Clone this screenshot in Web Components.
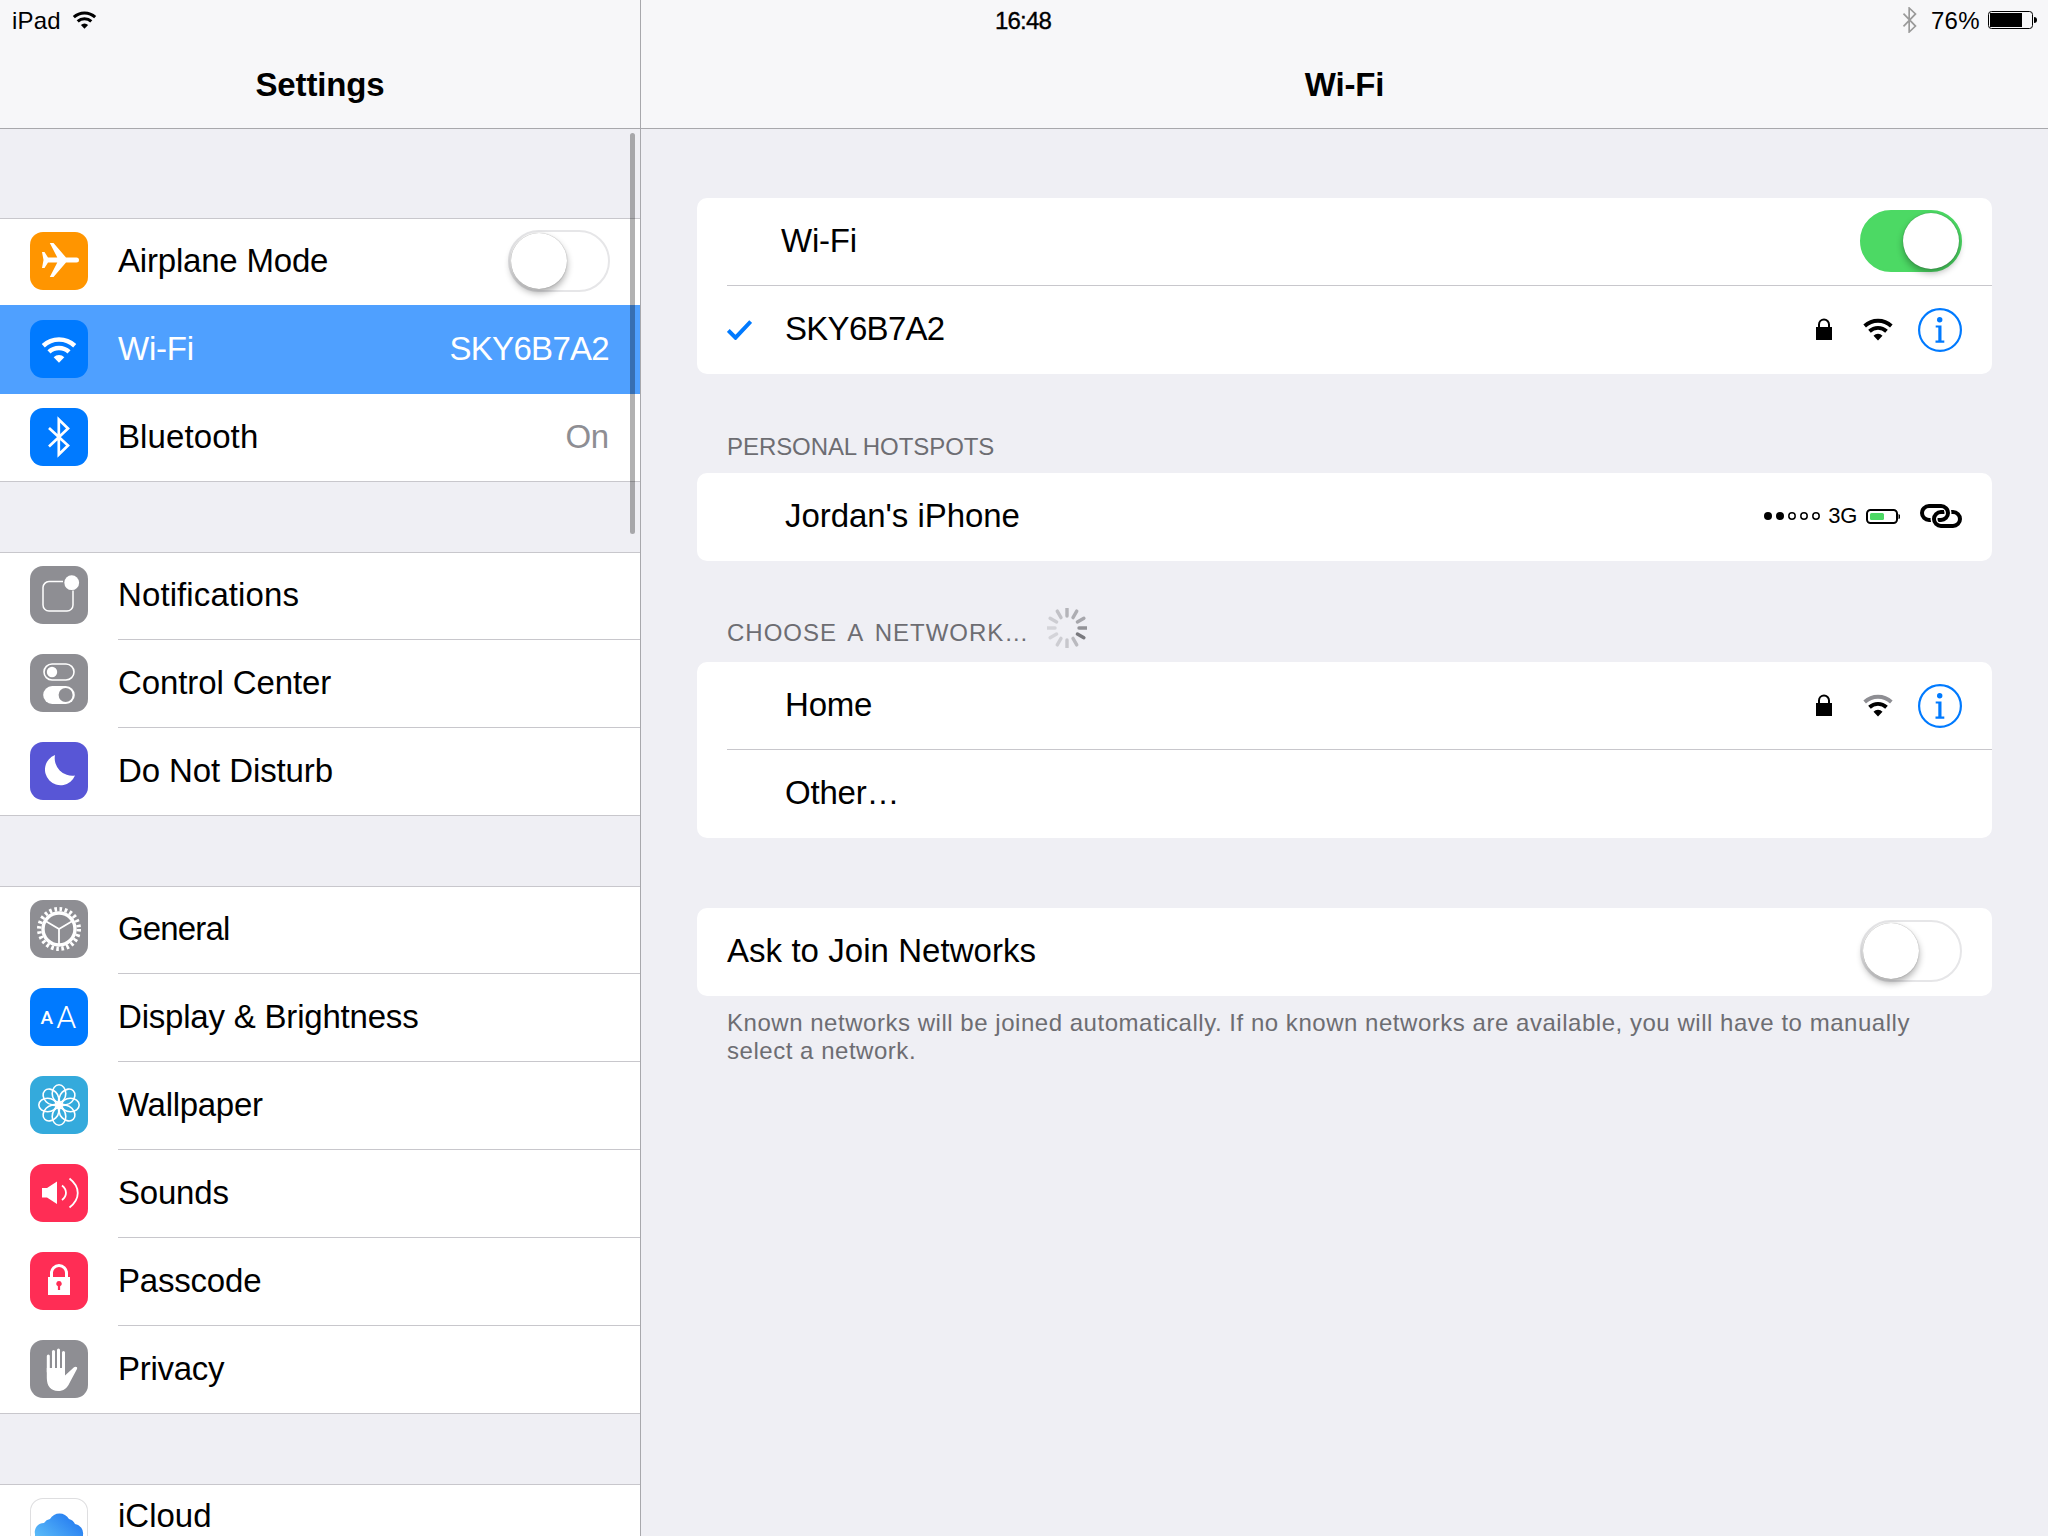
<!DOCTYPE html>
<html><head><meta charset="utf-8"><title>Settings</title>
<style>
html,body{margin:0;padding:0;width:2048px;height:1536px;overflow:hidden;background:#efeff4;font-family:"Liberation Sans",Arial,sans-serif;}
</style></head><body>
<settings-app>
  <master-pane slot="master">
    <nav-bar title="Settings"><status-left slot="status"></status-left></nav-bar>
    <settings-section>
      <settings-row icon="airplane" label="Airplane Mode"><ios-switch slot="end" side></ios-switch></settings-row>
      <settings-row icon="wifi" label="Wi-Fi" value="SKY6B7A2" selected></settings-row>
      <settings-row icon="bluetooth" label="Bluetooth" value="On" ls=".1"></settings-row>
    </settings-section>
    <settings-section>
      <settings-row icon="notifications" label="Notifications" ls=".1"></settings-row>
      <settings-row icon="control" label="Control Center" ls="-.1"></settings-row>
      <settings-row icon="moon" label="Do Not Disturb" ls="-.1"></settings-row>
    </settings-section>
    <settings-section>
      <settings-row icon="general" label="General" ls="-.85"></settings-row>
      <settings-row icon="display" label="Display &amp; Brightness"></settings-row>
      <settings-row icon="wallpaper" label="Wallpaper" ls="-.3"></settings-row>
      <settings-row icon="sounds" label="Sounds"></settings-row>
      <settings-row icon="passcode" label="Passcode"></settings-row>
      <settings-row icon="privacy" label="Privacy" ls="-.3"></settings-row>
    </settings-section>
    <settings-section>
      <settings-row icon="icloud" label="iCloud" ls="0" raised></settings-row>
    </settings-section>
  </master-pane>
  <detail-pane slot="detail">
    <nav-bar title="Wi-Fi"><status-right slot="status"></status-right></nav-bar>
    <detail-body>
      <group-card>
        <net-row label="Wi-Fi" indent="84"><ios-switch slot="end" on></ios-switch></net-row>
        <net-row label="SKY6B7A2" checked ls="-.7">
          <net-status slot="end" strength="3"></net-status>
        </net-row>
      </group-card>
      <section-head pad="12" height="99" ls="-.07">PERSONAL HOTSPOTS</section-head>
      <group-card>
        <net-row label="Jordan's iPhone" ls="-.05"><hotspot-status slot="end"></hotspot-status></net-row>
      </group-card>
      <section-head pad="15" height="101" ls="1" ws="4" spinner>CHOOSE A NETWORK…</section-head>
      <group-card>
        <net-row label="Home"><net-status slot="end" strength="2"></net-status></net-row>
        <net-row label="Other…"></net-row>
      </group-card>
      <group-card gap>
        <net-row label="Ask to Join Networks" indent="30" ls=".05"><ios-switch slot="end"></ios-switch></net-row>
      </group-card>
      <foot-note>Known networks will be joined automatically. If no known networks are available, you will have to manually select a network.</foot-note>
    </detail-body>
  </detail-pane>
</settings-app>
<script>
const FONT='"Liberation Sans",Arial,sans-serif';
const wifiSvg=(w,h,c,outer)=>`<svg width="${w}" height="${h}" viewBox="0 0 36 27" style="display:block"><g fill="none" stroke-width="4.6"><path d="M2 9.3A23.5 23.5 0 0 1 34 9.3" stroke="${outer||c}"/><path d="M7.8 15.6A15 15 0 0 1 28.2 15.6" stroke="${c}"/></g><path d="M18 26.6L12.6 21A7.6 7.6 0 0 1 23.4 21Z" fill="${c}"/></svg>`;
const btSvg=(w,h,c,sw)=>`<svg width="${w}" height="${h}" viewBox="0 0 22 39" style="display:block"><path d="M2 10L20 28.6 10.5 37.5V1.5L20 10.4 2 29" fill="none" stroke="${c}" stroke-width="${sw}"/></svg>`;
const lockSvg=`<svg width="16" height="22" viewBox="0 0 16 22" style="display:block"><path d="M3 10V6.5a5 5 0 0 1 10 0V10" fill="none" stroke="#000" stroke-width="2"/><rect x="0" y="9" width="16" height="13" fill="#000"/></svg>`;
function define(name,css,render){
  customElements.define(name,class extends HTMLElement{
    connectedCallback(){
      if(this.shadowRoot)return;
      const r=this.attachShadow({mode:'open'});
      r.innerHTML=`<style>${css}</style>`+render(this);
    }
  });
}
const ICONS={
 airplane:['#ff9500',`<path fill="#fff" d="M12 20h2.5l3.5 5.500h9.300L19.800 11h3.700L36 25.500h10.500a2.500 2.500 0 0 1 0 5H36L23.500 45h-3.700l7.500-14.500H18L14.500 36H12l1.500-8z"/>`],
 wifi:['#007aff',`<g transform="translate(11.3 16.6) scale(.983)"><g fill="none" stroke="#fff" stroke-width="4.6"><path d="M2 9.3A23.5 23.5 0 0 1 34 9.3"/><path d="M7.8 15.6A15 15 0 0 1 28.2 15.6"/></g><path d="M18 26.6L12.6 21A7.6 7.6 0 0 1 23.4 21Z" fill="#fff"/></g>`],
 bluetooth:['#007aff',`<path d="M19 20L38 37.5 28.8 46.5V11.5L38 20.5 19 38.5" fill="none" stroke="#fff" stroke-width="2.7"/>`],
 notifications:['#8e8e93',`<path d="M33 15.6H19a6 6 0 0 0-6 6V39a6 6 0 0 0 6 6h18a6 6 0 0 0 6-6V24.5" fill="none" stroke="#fff" stroke-width="1.5"/><circle cx="41.7" cy="16.7" r="7.4" fill="#fff"/>`],
 control:['#8e8e93',`<rect x="14" y="10" width="30" height="16" rx="8" fill="none" stroke="#fff" stroke-width="1.6"/><circle cx="22" cy="18" r="5.2" fill="#fff"/><rect x="13.2" y="32" width="31.6" height="18" rx="9" fill="#fff"/><circle cx="35.6" cy="41" r="7" fill="#8e8e93"/>`],
 moon:['#5856d6',`<path fill="#fff" d="M25 13A15.6 15.6 0 1 0 45 33.5 17.5 17.5 0 0 1 25 13Z"/>`],
 general:['#8e8e93',`<circle cx="29" cy="29" r="19.8" fill="none" stroke="#fff" stroke-width="4.4" stroke-dasharray="2.6 2.58"/><circle cx="29" cy="29" r="16" fill="none" stroke="#fff" stroke-width="3.4"/><path d="M29 29V45M29 29L15.500 21M29 29L42.500 21" stroke="#fff" stroke-width="1.8"/>`],
 display:['#007aff',`<g fill="#fff" font-family="Roboto,'Liberation Sans',sans-serif"><text x="10.5" y="36.3" font-size="19" font-weight="500">A</text><text x="26.3" y="40" font-size="32" font-weight="300">A</text></g>`],
 wallpaper:['#34aadc',`<g fill="none" stroke="#fff" stroke-width="1.6">${[0,45,90,135,180,225,270,315].map(a=>`<ellipse cx="29" cy="17.6" rx="6.8" ry="8.8" transform="rotate(${a} 29 29)"/>`).join('')}</g><circle cx="29" cy="29" r="3" fill="#fff"/>`],
 sounds:['#ff2d55',`<path fill="#fff" d="M12 24h5l10-6.500V40L17 33.500h-5z"/><path d="M32 21.500c5.300 4 5.300 10.500 0 14.500M39.500 14.500c11 8.500 11 20.500 0 29" fill="none" stroke="#fff" stroke-width="1.800"/>`],
 passcode:['#ff2d55',`<path d="M21.500 26V21a7.500 7.500 0 0 1 15 0V26" fill="none" stroke="#fff" stroke-width="3"/><path fill="#fff" fill-rule="evenodd" d="M18 25H40V43H18ZM29 29a2.700 2.700 0 0 0-1.100 5.200V38h2.200V34.200A2.700 2.700 0 0 0 29 29Z"/>`],
 privacy:['#8e8e93',`<g stroke="#fff" stroke-width="3" stroke-linecap="round"><path d="M18.300 16V32"/><path d="M23.500 11.500V30"/><path d="M28.500 10V30"/><path d="M33.500 12.500V32"/></g><path fill="#fff" d="M16.800 28H35V35.500L44 27.300C45.500 26 48 27 47 29L39.500 43C37 48.500 33.500 51 28 51C21 51 16.800 46 16.800 38Z"/>`],
 icloud:['#fff',`<defs><linearGradient id="c" x1="0" y1="1" x2="1" y2="0"><stop offset="0" stop-color="#6fd3fb"/><stop offset="1" stop-color="#1a6fef"/></linearGradient></defs><path fill="url(#c)" d="M5 36a9 9 0 0 1 9-11 9 9 0 0 1 6-4 11 11 0 0 1 19 0 9 9 0 0 1 6 5 9.500 9.500 0 0 1 8 11v20H5Z"/>`]
};
define('app-icon',`:host{display:block;width:58px;height:58px;flex:none}
 div{width:58px;height:58px;border-radius:13px;overflow:hidden;box-sizing:border-box}
 svg{display:block}`,el=>{
  const n=el.getAttribute('name');
  const [bg,svg]=ICONS[n];
  return `<div style="background:${bg};${n==='icloud'?'box-shadow:inset 0 0 0 1px #dedee0':''}"><svg width="58" height="58" viewBox="0 0 58 58">${svg}</svg></div>`;
});
define('settings-app',`:host{display:grid;grid-template-columns:640px 1px 1fr;width:2048px;height:1536px;overflow:hidden}
 .sep{background:#a8a8ac}`,()=>`<slot name="master"></slot><div class="sep"></div><slot name="detail"></slot>`);
define('master-pane',`:host{display:flex;flex-direction:column;position:relative;height:1536px;overflow:hidden;background:#efeff4}
 .bar{position:absolute;left:630px;top:133px;width:5px;height:401px;border-radius:3px;background:rgba(0,0,0,.3);z-index:5}`,()=>`<slot></slot><div class="bar"></div>`);
define('detail-pane',`:host{display:flex;flex-direction:column;height:1536px;overflow:hidden;background:#efeff4}`,()=>`<slot></slot>`);
define('nav-bar',`:host{display:block;height:128px;background:#f7f7f9;border-bottom:1px solid #a8a8ac;flex:none;margin-bottom:89px;font-family:${FONT};color:#000}
 .st{height:40px;display:flex;align-items:center}
 h1{margin:0;height:88px;line-height:90px;text-align:center;font-size:33px;font-weight:700;letter-spacing:-.15px}`,el=>`<div class="st"><slot name="status"></slot></div><h1>${el.getAttribute('title')}</h1>`);
define('status-left',`:host{display:flex;align-items:center;gap:11px;padding-left:12px;font:24px ${FONT};letter-spacing:.2px;color:#000;line-height:28px;height:40px}
 span{padding-top:2px}`,()=>`<span>iPad</span>${wifiSvg(25,18,'#000')}`);
define('status-right',`:host{display:flex;align-items:center;width:100%;height:40px;font:24px ${FONT};color:#000;line-height:28px}
 span{padding-top:2px}
 .t{margin-left:353px;width:58px;text-align:center;-webkit-text-stroke:.35px #000;letter-spacing:-.8px;font-size:24px}
 .r{margin-left:auto;display:flex;align-items:center;padding-right:11px}
 .p{margin:0 8px 0 14px;letter-spacing:.35px}
 `,()=>`<span class="t">16:48</span><div class="r">${btSvg(15,26,'#9a9a9a',2.5)}<span class="p">76%</span>
 <svg width="49" height="18" viewBox="0 0 49 18" style="display:block"><rect x=".5" y=".5" width="44" height="17" rx="3" fill="none" stroke="#000"/><rect x="2" y="2" width="32" height="14" fill="#000"/><path d="M46 6a3 3 0 0 1 3 3 3 3 0 0 1-3 3z" fill="#000"/></svg></div>`);
define('settings-section',`:host{display:block;margin-bottom:70px;background:#fff}`,()=>`<slot></slot>`);
define('settings-row',`:host{display:flex;height:88px;box-sizing:border-box;background:#fff;font:33px ${FONT};color:#000;position:relative}
 :host(:first-child){box-shadow:inset 0 1px #c8c7cc}
 :host(:last-child){box-shadow:inset 0 -1px #c8c7cc}
 :host(:first-child:last-child){box-shadow:inset 0 1px #c8c7cc}
 :host([selected]){background:#4fa0ff;color:#fff;height:89px;margin-top:-1px;z-index:1;box-shadow:none}
 app-icon{margin:14px 30px 0 30px}
 :host([selected]) app-icon{margin-top:15px}
 .b{flex:1;display:flex;align-items:center;justify-content:space-between;padding:0 31px 1px 0;border-bottom:1px solid #c8c7cc;min-width:0}
 :host([selected]) .b,:host(:last-child) .b{border-bottom-color:transparent}
 :host([raised]) .b{padding-bottom:23px}
 .v{color:#8e8e93;letter-spacing:-.2px}
 :host([selected]) .v{color:#fff;letter-spacing:-.7px}`,el=>{
   const v=el.getAttribute('value');
   const ls=el.getAttribute('ls')||'-.2';
   return `<app-icon name="${el.getAttribute('icon')}"></app-icon><div class="b"><span style="letter-spacing:${ls}px">${el.getAttribute('label')}</span>${v?`<span class="v">${v}</span>`:''}<slot name="end"></slot></div>`;
});
define('ios-switch',`:host{display:block;width:102px;height:62px;position:relative;flex:none}
 :host([side]){margin-right:-1px}
 .t{position:absolute;inset:0;border-radius:31px;box-sizing:border-box;border:2px solid #e6e6e8;background:#fff}
 :host([on]) .t{background:#4cd964;border-color:#4cd964}
 .k{position:absolute;left:3px;top:3px;width:56px;height:56px;border-radius:50%;background:#fff;box-shadow:0 4px 7px rgba(0,0,0,.32),0 0 1px rgba(0,0,0,.4)}
 :host([on]) .k{left:43px}`,()=>`<div class="t"></div><div class="k"></div>`);
define('detail-body',`:host{display:flex;flex-direction:column;padding:0 56px;margin-top:-20px}`,()=>`<slot></slot>`);
define('group-card',`:host{display:block;background:#fff;border-radius:10px;overflow:hidden}
 :host([gap]){margin-top:70px}`,()=>`<slot></slot>`);
define('net-row',`:host{display:block;height:88px;box-sizing:border-box;font:33px ${FONT};color:#000;position:relative;padding-left:30px}
 .b{height:88px;box-sizing:border-box;display:flex;align-items:center;padding:0 30px 1px 0;border-bottom:1px solid #c8c7cc;position:relative}
 :host(:last-child) .b{border-bottom-color:transparent}
 .n{flex:1}
 svg{display:block;flex:none}`,el=>{
   const ind=el.getAttribute('indent');
   const pad=(ind?+ind:88)-30;
   const ls=el.getAttribute('ls')||'-.2';
   const chk=el.hasAttribute('checked')?`<svg width="25" height="20" viewBox="0 0 25 20" style="position:absolute;left:0;top:34px"><path d="M1.300 10.500L8.500 17.700 23.700 1.500" fill="none" stroke="#007aff" stroke-width="4"/></svg>`:'';
   return `<div class="b">${chk}<span class="n" style="padding-left:${pad}px;letter-spacing:${ls}px">${el.getAttribute('label')}</span><slot name="end"></slot></div>`;
});
define('info-btn',`:host{display:block;width:44px;height:44px;flex:none}`,()=>`<svg width="44" height="44" viewBox="0 0 44 44" style="display:block"><circle cx="22" cy="22" r="20.900" fill="none" stroke="#007aff" stroke-width="2.200"/><circle cx="21.700" cy="11.700" r="2.700" fill="#007aff"/><path fill="#007aff" d="M17.700 17.600h5.800v15h2.800v2.100H17.500v-2.100h2.800v-13h-2.600z"/></svg>`);
define('net-status',`:host{display:flex;align-items:center;flex:none;margin-top:1px}
 .l{margin:0 31px 2px 0}.w{margin-right:25px}`,el=>{
   const weak=el.getAttribute('strength')==='2';
   return `<div class="l">${lockSvg}</div><div class="w">${wifiSvg(30,23,'#000',weak?'#8e8e93':'')}</div><info-btn></info-btn>`;
});
define('hotspot-status',`:host{display:flex;align-items:center;flex:none;font:22px ${FONT};color:#000}
 .g{margin:0 9px 0 8px;letter-spacing:-.3px}
 svg{display:block}`,()=>`<svg width="56" height="10" viewBox="0 0 56 10"><circle cx="4" cy="5" r="4"/><circle cx="16" cy="5" r="4"/><g fill="none" stroke="#000" stroke-width="1.500"><circle cx="28" cy="5" r="3.200"/><circle cx="40" cy="5" r="3.200"/><circle cx="52" cy="5" r="3.200"/></g></svg>
 <span class="g">3G</span>
 <svg width="34" height="15" viewBox="0 0 34 15" style="margin-right:20px"><rect x="1" y="1" width="30" height="13" rx="3.500" fill="none" stroke="#000" stroke-width="2"/><rect x="4" y="4" width="14" height="7" rx="1.500" fill="#4cd964"/><path d="M32.500 5a2 2 0 0 1 1.500 2.500 2 2 0 0 1-1.500 2.500z"/></svg>
 <svg width="42" height="24" viewBox="0 0 42 24" fill="none" stroke-width="4">
  <rect x="14" y="8" width="26" height="14" rx="7" stroke="#000"/>
  <path d="M21 2A7 7 0 0 1 28 9 7 7 0 0 1 21 16" stroke="#fff" stroke-width="7"/>
  <rect x="2" y="2" width="26" height="14" rx="7" stroke="#000"/>
  <path d="M21 22A7 7 0 0 1 14 15 7 7 0 0 1 21 8" stroke="#fff" stroke-width="7"/>
  <path d="M22 22H21A7 7 0 0 1 14 15 7 7 0 0 1 21 8H24" stroke="#000"/>
 </svg>`);
define('section-head',`:host{display:flex;align-items:flex-end;box-sizing:border-box;padding-left:30px;font:24px/28px ${FONT};color:#6d6d72;flex:none;position:relative}
 svg{display:block;margin-left:18px;margin-bottom:-1px;flex:none}`,el=>{
   const ops=[.45,.5,.55,.7,.9,.4,.3,.25,.2,.2,.25,.35];
   const sp=el.hasAttribute('spinner')?`<svg width="40" height="40" viewBox="-20 -20 40 40">${ops.map((o,i)=>`<line x1="0" y1="-12" x2="0" y2="-19.500" stroke="#6d6d72" stroke-width="3.400" stroke-linecap="round" opacity="${o}" transform="rotate(${i*30})"/>`).join('')}</svg>`:'';
   el.style.height=el.getAttribute('height')+'px';
   el.style.paddingBottom=el.getAttribute('pad')+'px';
   const ls=el.getAttribute('ls')||'-.15';
   const ws=el.getAttribute('ws')||'0';
   return `<span style="letter-spacing:${ls}px;word-spacing:${ws}px"><slot></slot></span>${sp}`;
});
define('foot-note',`:host{display:block;padding:13px 30px 0 30px;font:24px/28px ${FONT};letter-spacing:.53px;color:#6d6d72}`,()=>`<slot></slot>`);
</script>
</body></html>
